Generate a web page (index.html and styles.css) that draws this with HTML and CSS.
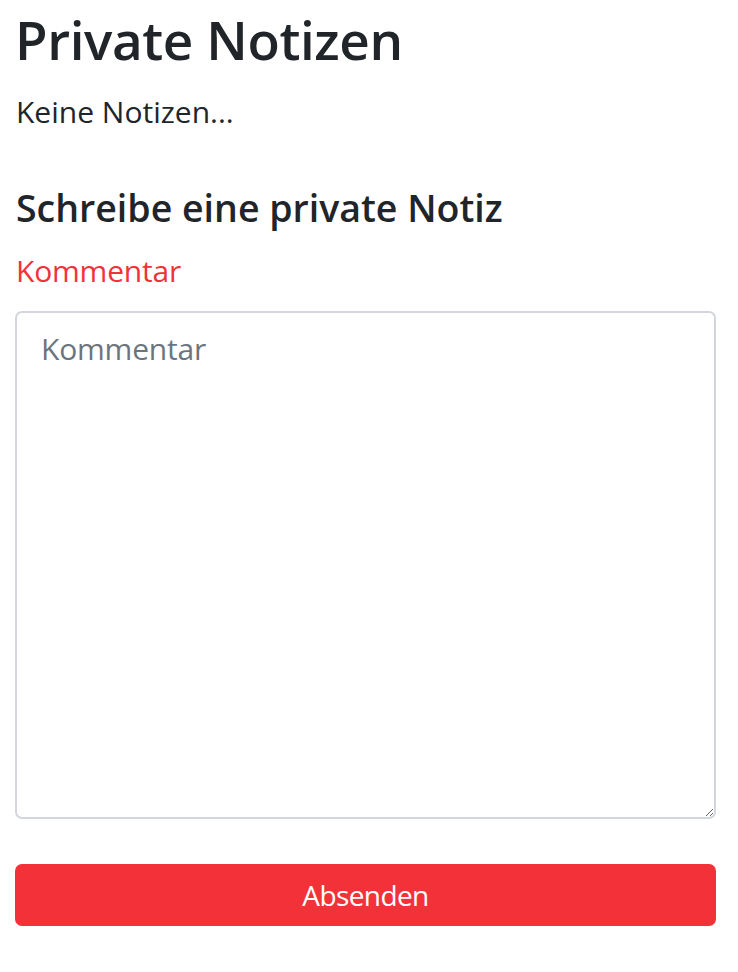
FILE: index.html
```html
<!DOCTYPE html>
<html lang="de">
<head>
<meta charset="utf-8">
<title>Private Notizen</title>
<link rel="stylesheet" href="styles.css">
</head>
<body>
<main class="page">
  <h1 class="title">Private Notizen</h1>
  <p class="empty">Keine Notizen...</p>
  <h3 class="subtitle">Schreibe eine private Notiz</h3>
  <form class="note-form">
    <label class="field-label" for="comment">Kommentar</label>
    <textarea id="comment" class="field-input" placeholder="Kommentar"></textarea>
    <button type="button" class="btn-submit">Absenden</button>
  </form>
</main>
</body>
</html>
```

FILE: styles.css
```css
html, body {
  margin: 0;
  padding: 0;
  background: #fff;
}
body {
  font-family: "Open Sans", "Noto Sans", sans-serif;
  color: #212529;
}
.page {
  padding: 8px 22px 0 15px;
}
.title {
  margin: 0;
  font-size: 53px;
  font-weight: 600;
  line-height: 64px;
  letter-spacing: -0.4px;
}
.empty {
  margin: 17px 0 0 1px;
  font-size: 30px;
  line-height: 45px;
}
.subtitle {
  margin: 51px 0 0 1px;
  font-size: 37.5px;
  font-weight: 600;
  line-height: 45px;
}
.note-form {
  display: flex;
  flex-direction: column;
}
.field-label {
  margin: 18px 0 0 1px;
  font-size: 30px;
  line-height: 45px;
  color: #f2323a;
  letter-spacing: -0.2px;
}
.field-input {
  margin-top: 18px;
  height: 508px;
  box-sizing: border-box;
  border: 2px solid #d3d6dc;
  border-radius: 7px;
  padding: 13px 24px;
  font-family: inherit;
  font-size: 30px;
  line-height: 45px;
  letter-spacing: -0.2px;
  color: #212529;
  resize: vertical;
}
.field-input::placeholder {
  color: #6c757d;
}
.btn-submit {
  margin-top: 45px;
  height: 62px;
  border: none;
  border-radius: 7px;
  background: #f23238;
  color: #fff;
  font-family: inherit;
  font-size: 28px;
  letter-spacing: -0.6px;
  cursor: pointer;
}
```
